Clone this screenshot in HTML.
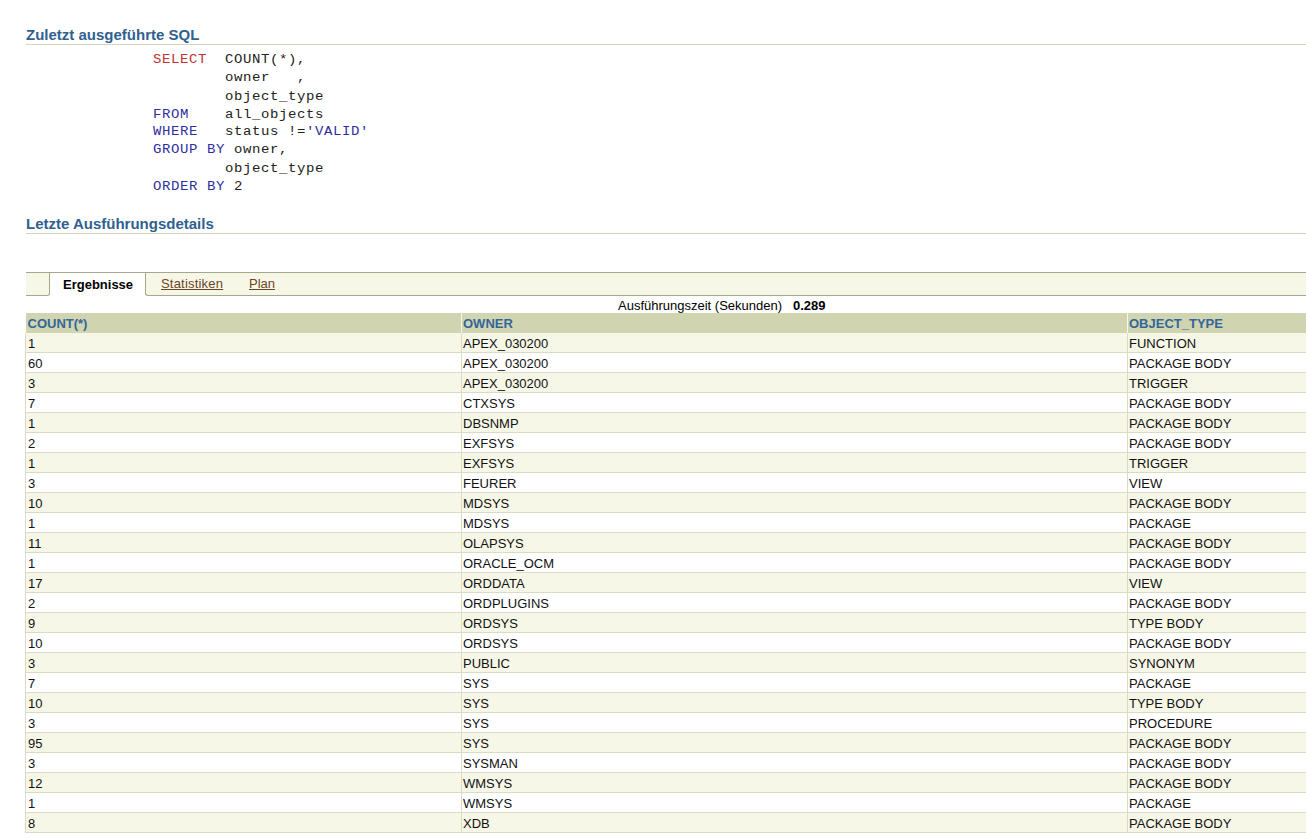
<!DOCTYPE html>
<html><head><meta charset="utf-8">
<style>
html,body{margin:0;padding:0;background:#fff;width:1306px;height:838px;overflow:hidden;position:relative}
body{font-family:"Liberation Sans",sans-serif;color:#000}
.h{position:absolute;left:26px;right:0;font-weight:bold;font-size:15px;line-height:17px;color:#30608f}
.hl{position:absolute;left:26px;right:0;height:1px;background:#d3d4b9}
.sql{position:absolute;left:153px;top:0;font-family:"Liberation Mono",monospace;font-size:14px;letter-spacing:0.6px;line-height:20.25px;transform:scaleY(0.889);transform-origin:0 0;white-space:pre;color:#222}
.sql .kr{color:#c4302e}
.sql .kb{color:#2e2ea0}
.tabbar{position:absolute;left:26px;right:0;top:272px;height:24px}
.tb-top{position:absolute;left:0;right:0;top:0;height:1px;background:#a6a68c}
.cream1{position:absolute;left:0;top:1px;width:23px;height:22px;background:#f7f7e7;border-bottom:1px solid #a6a68c;border-right:1px solid #a6a68c;border-bottom-right-radius:3px}
.cream2{position:absolute;left:119px;right:-2px;top:1px;height:22px;background:#f7f7e7;border-bottom:1px solid #a6a68c;border-left:1px solid #a6a68c;border-bottom-left-radius:3px}
.t{position:absolute;font-size:13px;line-height:15px;white-space:nowrap}
.lnk{color:#6b4526;text-decoration:underline}
table{position:absolute;left:25px;top:313px;border-collapse:collapse;width:1290px;font-size:13px}
th{background:#d0d4b1;color:#336699;text-align:left;font-weight:bold;height:20px;padding:0 0 0 2px;line-height:15px;border-left:1px solid #f7f7e7}
td{height:16px;vertical-align:top;padding:3px 0 0 2px;line-height:15px;border-left:1px solid #d9dbc4;border-bottom:1px solid #d9dbc4;color:#111}
td+td{padding-left:1px}th+th{padding-left:1px}
tr.o td{background:#f7f7e7}
tr.e td{background:#fff}
</style></head><body>
<div class="h" style="top:26px">Zuletzt ausgeführte SQL</div>
<div class="hl" style="top:44px"></div>
<div class="sql" style="top:51px"><span class="kr">SELECT</span>  COUNT(*),
        owner   ,
        object_type
<span class="kb">FROM</span>    all_objects
<span class="kb">WHERE</span>   status !=<span class="kb">'VALID'</span>
<span class="kb">GROUP BY</span> owner,
        object_type
<span class="kb">ORDER BY</span> 2</div>
<div class="h" style="top:215px">Letzte Ausführungsdetails</div>
<div class="hl" style="top:233px"></div>

<div class="tabbar">
<div class="tb-top"></div>
<div class="cream1"></div>
<div class="cream2"></div>
</div>
<div class="t" style="left:63px;top:277px;font-weight:bold">Ergebnisse</div>
<div class="t lnk" style="left:161px;top:276px;letter-spacing:0.2px">Statistiken</div>
<div class="t lnk" style="left:249px;top:276px">Plan</div>
<div class="t" style="left:618px;top:298px">Ausführungszeit (Sekunden)</div>
<div class="t" style="left:793px;top:298px;font-weight:bold">0.289</div>

<table>
<colgroup><col style="width:436px"><col style="width:666px"><col></colgroup>
<tr><th style="border-left:none">COUNT(*)</th><th>OWNER</th><th>OBJECT_TYPE</th></tr>
<tr class="o"><td>1</td><td>APEX_030200</td><td>FUNCTION</td></tr>
<tr class="e"><td>60</td><td>APEX_030200</td><td>PACKAGE BODY</td></tr>
<tr class="o"><td>3</td><td>APEX_030200</td><td>TRIGGER</td></tr>
<tr class="e"><td>7</td><td>CTXSYS</td><td>PACKAGE BODY</td></tr>
<tr class="o"><td>1</td><td>DBSNMP</td><td>PACKAGE BODY</td></tr>
<tr class="e"><td>2</td><td>EXFSYS</td><td>PACKAGE BODY</td></tr>
<tr class="o"><td>1</td><td>EXFSYS</td><td>TRIGGER</td></tr>
<tr class="e"><td>3</td><td>FEURER</td><td>VIEW</td></tr>
<tr class="o"><td>10</td><td>MDSYS</td><td>PACKAGE BODY</td></tr>
<tr class="e"><td>1</td><td>MDSYS</td><td>PACKAGE</td></tr>
<tr class="o"><td>11</td><td>OLAPSYS</td><td>PACKAGE BODY</td></tr>
<tr class="e"><td>1</td><td>ORACLE_OCM</td><td>PACKAGE BODY</td></tr>
<tr class="o"><td>17</td><td>ORDDATA</td><td>VIEW</td></tr>
<tr class="e"><td>2</td><td>ORDPLUGINS</td><td>PACKAGE BODY</td></tr>
<tr class="o"><td>9</td><td>ORDSYS</td><td>TYPE BODY</td></tr>
<tr class="e"><td>10</td><td>ORDSYS</td><td>PACKAGE BODY</td></tr>
<tr class="o"><td>3</td><td>PUBLIC</td><td>SYNONYM</td></tr>
<tr class="e"><td>7</td><td>SYS</td><td>PACKAGE</td></tr>
<tr class="o"><td>10</td><td>SYS</td><td>TYPE BODY</td></tr>
<tr class="e"><td>3</td><td>SYS</td><td>PROCEDURE</td></tr>
<tr class="o"><td>95</td><td>SYS</td><td>PACKAGE BODY</td></tr>
<tr class="e"><td>3</td><td>SYSMAN</td><td>PACKAGE BODY</td></tr>
<tr class="o"><td>12</td><td>WMSYS</td><td>PACKAGE BODY</td></tr>
<tr class="e"><td>1</td><td>WMSYS</td><td>PACKAGE</td></tr>
<tr class="o"><td>8</td><td>XDB</td><td>PACKAGE BODY</td></tr>
</table>
</body></html>
